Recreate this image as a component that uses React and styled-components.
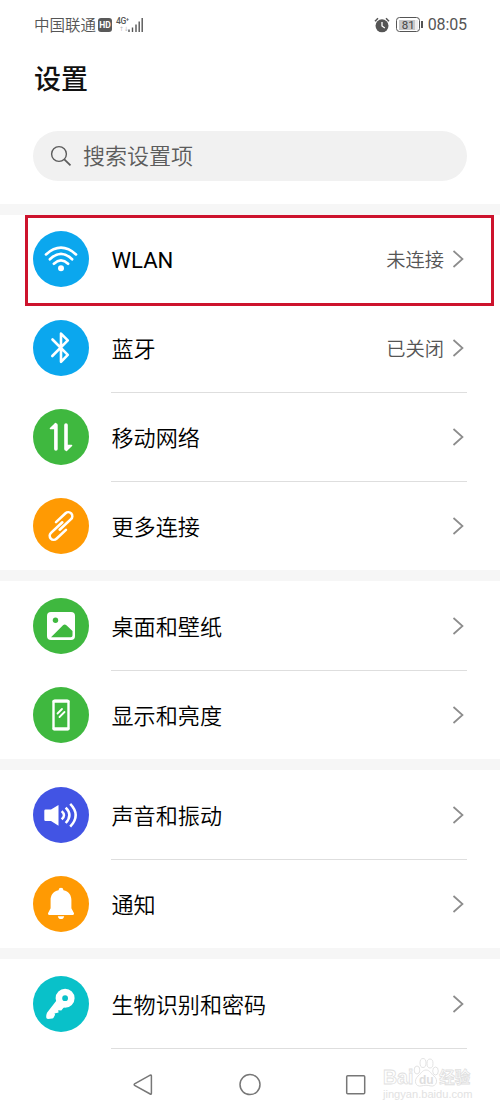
import React from "react";
import styled, { createGlobalStyle } from "styled-components";

const GlobalStyle = createGlobalStyle`
  * { box-sizing: border-box; }
  body {
    margin: 0;
    background: #fff;
    font-family: Roboto, "Noto Sans CJK SC", sans-serif;
    color: #111;
  }
  svg { display: block; flex: none; }
`;

const Screen = styled.main`
  width: 500px;
  height: 1111px;
  overflow: hidden;
  display: flex;
  flex-direction: column;
  background: #fff;
`;

const StatusBar = styled.header`
  height: 48px;
  padding: 1px 33px 0 34px;
  display: flex;
  align-items: center;
  justify-content: space-between;
  color: #555;
`;

const StatusGroup = styled.div`
  display: flex;
  align-items: center;
  height: 24px;
`;

const Carrier = styled.span`
  font-size: 15.5px;
  line-height: 24px;
  font-weight: 350;
  margin-right: 2px;
  padding-top: 2px;
`;

const HdBadge = styled.span`
  width: 14px;
  height: 14px;
  border-radius: 3px;
  background: #595959;
  color: #fff;
  font-size: 8.5px;
  line-height: 14px;
  font-weight: 700;
  text-align: center;
`;

const Network = styled.span`
  display: flex;
  flex-direction: column;
  width: 11px;
  height: 16px;
  margin-left: 4px;
  font-size: 8.5px;
  line-height: 8px;
  font-weight: 500;
  white-space: nowrap;
  letter-spacing: -0.4px;
`;

const Arrows = styled.span`
  font-family: "DejaVu Sans", sans-serif;
  font-size: 6px;
  line-height: 7px;
  padding-left: 3px;
  color: #bbb;
`;

const Battery = styled.span`
  display: flex;
  align-items: center;
  margin: 0 5px 0 6px;
`;

const BatteryBody = styled.span`
  width: 24px;
  height: 15px;
  padding: 1.5px;
  border: 1px solid #555;
  border-radius: 3.5px;
`;

const BatteryLevel = styled.span`
  display: block;
  height: 10px;
  background: linear-gradient(90deg, #c9c9c9 82%, #eee 82%);
  color: #444;
  font-size: 11.5px;
  line-height: 10.5px;
  text-align: center;
`;

const BatteryTip = styled.span`
  width: 1.5px;
  height: 7px;
  margin-left: 1px;
  background: #555;
`;

const Clock = styled.span`
  font-size: 16px;
  line-height: 24px;
  letter-spacing: -0.1px;
  padding-top: 1px;
`;

const Title = styled.h1`
  margin: 12px 0 0 34px;
  height: 40px;
  font-size: 27px;
  line-height: 40px;
  font-weight: 500;
`;

const SearchBox = styled.div`
  flex: none;
  height: 50px;
  margin: 31px 33px 23px;
  padding-left: 17px;
  border-radius: 25px;
  background: #f1f1f1;
  display: flex;
  align-items: center;
  gap: 11px;
  color: #5c5c5c;
  font-size: 22px;
  line-height: 32px;
  font-weight: 350;
`;

const SearchHint = styled.span`
  padding-top: 2px;
`;

const Group = styled.section`
  flex: none;
  border-top: 11px solid #f6f6f6;
  padding-top: ${(p) => (p.$first ? 0 : 1)}px;
`;

const Row = styled.div`
  position: relative;
  height: ${(p) => (p.$last ? 88 : 89)}px;
  padding: 0 33px;
  display: flex;
  gap: 22px;
`;

const IconDisc = styled.span`
  width: 56px;
  height: 56px;
  margin-top: 16px;
  border-radius: 50%;
  background: ${(p) => p.$color};
`;

const RowBody = styled.div`
  flex: 1;
  height: 89px;
  display: flex;
  align-items: center;
  padding-right: 2px;
  border-bottom: 1px solid ${(p) => (p.$last ? "transparent" : "#dedede")};
`;

const Label = styled.span`
  flex: 1;
  font-size: 22.1px;
  line-height: 32px;
  font-weight: ${(p) => (p.$latin ? 400 : 350)};
  color: #000;
  padding: 2px 0 0 0.5px;
`;

const Value = styled.span`
  font-size: 19.3px;
  line-height: 28px;
  color: #555;
  font-weight: 350;
  margin-right: 7px;
  padding-top: 4px;
`;

const Highlight = styled.div`
  position: absolute;
  left: 25px;
  right: 6px;
  top: 0;
  height: 91px;
  border: 3px solid #cd132d;
  z-index: 1;
`;

const NavBar = styled.nav`
  position: relative;
  flex: 1;
  display: flex;
  justify-content: space-between;
  padding: 24px 133px 0 132px;
`;

const Watermark = styled.div`
  position: absolute;
  left: 383px;
  top: 7px;
  width: 92px;
  color: #fff;
  -webkit-text-stroke: 0.8px #e0e0e0;
`;

const WatermarkBrand = styled.div`
  display: flex;
  align-items: flex-end;
  height: 32px;
  font-family: "Liberation Sans", "Noto Sans CJK SC", sans-serif;
  font-weight: 700;
  font-size: 19.5px;
  line-height: 22px;
`;

const WatermarkCjk = styled.span`
  font-size: 15.5px;
  line-height: 21px;
`;

const WatermarkSite = styled.div`
  font-family: "Liberation Sans", sans-serif;
  font-size: 11.1px;
  line-height: 12px;
  color: #e2e2e2;
  -webkit-text-stroke: 0;
`;

const stroke = { fill: "none", stroke: "#fff", strokeLinecap: "round", strokeLinejoin: "round" };

const glyphs = {
  wifi: (
    <g {...stroke} strokeWidth="2.7">
      <path d="M13 23.4Q28 9.8 43 23.4M16.9 28.2Q28 17.6 39.1 28.2M20.9 32.7Q28 26.2 35.1 32.7" />
      <circle cx="28" cy="37.3" r="3" fill="#fff" stroke="none" />
    </g>
  ),
  bluetooth: (
    <path {...stroke} strokeWidth="2.6" d="M19.5 19.5L34.8 34.9L28 41.8V13.6L34.8 20.4L19.3 36" />
  ),
  data: (
    <g {...stroke} strokeWidth="3.6">
      <path d="M22.9 16V40M33 16V40" />
      <path d="M22.6 14.4L17.4 19.6H22.6ZM33.4 41.6L38.6 36.4H33.4Z" fill="#fff" strokeWidth="1.4" />
    </g>
  ),
  link: (
    <path
      {...stroke}
      strokeWidth="2.6"
      transform="rotate(-43 28 28)"
      d="M27 21.8H40A4 4 0 0 1 40 29.8H24.5M29 34.2H16A4 4 0 0 1 16 26.2H31.5"
    />
  ),
  image: (
    <>
      <rect x="14" y="14" width="28" height="28" rx="4" fill="#fff" />
      <circle cx="22.5" cy="22.2" r="2.7" fill="#3fb83f" />
      <path d="M18 39.2L30 27.3Q31.7 25.7 33.4 27.3L39.5 33V37.4Q39.5 39.2 37.7 39.2Z" fill="#3fb83f" />
    </>
  ),
  phone: (
    <g {...stroke}>
      <rect x="20.5" y="13.6" width="15" height="28.8" rx="1.6" strokeWidth="2.4" />
      <path d="M20.9 14.2H35.1M20.9 41.8H35.1" strokeWidth="3" />
      <path d="M24.5 26.5L29 22M26.5 30L31.5 25" strokeWidth="1.8" />
    </g>
  ),
  sound: (
    <>
      <path d="M12.5 22.6H18L25.5 17.9V38.7L18 33.9H12.5Q11.3 33.9 11.3 32.7V23.8Q11.3 22.6 12.5 22.6Z" fill="#fff" />
      <g {...stroke} strokeWidth="2.5" strokeLinecap="butt">
        <path d="M28.7 24.1Q33.3 28.2 28.7 32.4M32.7 20.7Q40.2 28.2 32.7 36M37.2 16.9Q48.2 28.2 37.2 39.7" />
      </g>
    </>
  ),
  bell: (
    <path
      fill="#fff"
      d="M25.5 14.2Q25.8 11.8 28 11.8Q30.2 11.8 30.5 14.2C35.8 15.2 38.4 19.2 38.4 24V32.2L41 37.3Q41.3 38.8 39.8 38.9H16.2Q14.7 38.8 15 37.3L17.6 32.2V24C17.6 19.2 20.2 15.2 25.5 14.2ZM24.8 40.2H31.2Q30.5 43.1 28 43.1Q25.5 43.1 24.8 40.2Z"
    />
  ),
  key: (
    <>
      <circle cx="32.1" cy="22.2" r="6.2" fill="none" stroke="#fff" strokeWidth="6.6" />
      <path
        fill="#fff"
        d="M23.3 24.8L14 36.8Q13.2 38.6 13.2 41.2Q13.3 43 15 43L19.3 42.5Q20.2 42.4 20.7 41.4L22.1 38.8L21.5 37.4L25.6 36.5L25.2 34.2L28.3 34.6L31.6 30.5Z"
      />
    </>
  ),
};

const groups = [
  [
    { icon: "wifi", color: "#0ba7ee", label: "WLAN", latin: true, value: "未连接", highlighted: true },
    { icon: "bluetooth", color: "#0ba7ee", label: "蓝牙", value: "已关闭" },
    { icon: "data", color: "#3fb83f", label: "移动网络" },
    { icon: "link", color: "#ff9a03", label: "更多连接" },
  ],
  [
    { icon: "image", color: "#3fb83f", label: "桌面和壁纸" },
    { icon: "phone", color: "#3fb83f", label: "显示和亮度" },
  ],
  [
    { icon: "sound", color: "#4254e4", label: "声音和振动" },
    { icon: "bell", color: "#ff9a03", label: "通知" },
  ],
  [{ icon: "key", color: "#09c1c9", label: "生物识别和密码", divided: true }],
];

const Chevron = () => (
  <svg width="14" height="20" viewBox="0 0 14 20">
    <path d="M2.5 2L11.5 10L2.5 18" fill="none" stroke="#8c8c8c" strokeWidth="1.7" />
  </svg>
);

const SettingRow = ({ item, last }) => (
  <Row $last={last}>
    {item.highlighted && <Highlight />}
    <IconDisc $color={item.color}>
      <svg width="56" height="56" viewBox="0 0 56 56">{glyphs[item.icon]}</svg>
    </IconDisc>
    <RowBody $last={last}>
      <Label $latin={item.latin}>{item.label}</Label>
      {item.value && <Value>{item.value}</Value>}
      <Chevron />
    </RowBody>
  </Row>
);

export default function App() {
  return (
    <Screen>
      <GlobalStyle />
      <StatusBar>
        <StatusGroup>
          <Carrier>中国联通</Carrier>
          <HdBadge>HD</HdBadge>
          <Network>
            4G⁺
            <Arrows>↑↓</Arrows>
          </Network>
          <svg width="16" height="16" viewBox="0 0 16 16">
            <path d="M2 12.5V15M5.5 10.5V15M9 7.5V15M12.2 4.5V15M15.2 1V15" stroke="#555" strokeWidth="1.4" />
          </svg>
        </StatusGroup>
        <StatusGroup>
          <svg width="16" height="16" viewBox="0 0 16 16">
            <circle cx="8" cy="8.8" r="6.5" fill="#555" />
            <path d="M8 5V9L10.8 11" fill="none" stroke="#fff" strokeWidth="1.3" />
            <path d="M1 4.2L4 1.3M15 4.2L12 1.3" stroke="#555" strokeWidth="1.5" />
          </svg>
          <Battery>
            <BatteryBody>
              <BatteryLevel>81</BatteryLevel>
            </BatteryBody>
            <BatteryTip />
          </Battery>
          <Clock>08:05</Clock>
        </StatusGroup>
      </StatusBar>
      <Title>设置</Title>
      <SearchBox>
        <svg width="22" height="22" viewBox="0 0 22 22">
          <circle cx="9" cy="9" r="7.4" fill="none" stroke="#5c5c5c" strokeWidth="1.4" />
          <path d="M14.3 14.3L20.5 20.3" stroke="#5c5c5c" strokeWidth="1.8" />
        </svg>
        <SearchHint>搜索设置项</SearchHint>
      </SearchBox>
      {groups.map((rows, g) => (
        <Group key={g} $first={g === 0}>
          {rows.map((item, i) => (
            <SettingRow key={item.label} item={item} last={i === rows.length - 1 && !item.divided} />
          ))}
        </Group>
      ))}
      <NavBar>
        <svg width="22" height="24" viewBox="0 0 22 24">
          <path d="M18.2 2.2Q19.4 1.7 19.4 3V20.2Q19.4 21.5 18.2 21L2.6 12.4Q1.7 11.6 2.6 10.8Z" fill="none" stroke="#777" strokeWidth="1.5" />
        </svg>
        <svg width="24" height="24" viewBox="0 0 24 24">
          <circle cx="12" cy="11.6" r="10" fill="none" stroke="#777" strokeWidth="1.5" />
        </svg>
        <svg width="22" height="24" viewBox="0 0 22 24">
          <rect x="1.7" y="2.7" width="18" height="18" rx="1" fill="none" stroke="#777" strokeWidth="1.5" />
        </svg>
        <Watermark>
          <WatermarkBrand>
            Bai
            <svg width="26" height="31" viewBox="0 0 26 31" fill="#fff" stroke="#e0e0e0" strokeWidth="0.9">
              <ellipse cx="4" cy="13" rx="2.8" ry="4" />
              <ellipse cx="10" cy="6" rx="3" ry="4.5" />
              <ellipse cx="17" cy="6.5" rx="3" ry="4.5" />
              <ellipse cx="22.5" cy="14" rx="2.8" ry="4" />
              <path d="M13 13C17 13 18 17 21 19C26 23 23 30 18 29C14 28 12 28 8 29C3 30 0 24 5 19C8 17 9 13 13 13Z" />
              <text x="6" y="26.5" fontSize="12" fontFamily="Liberation Sans" fontWeight="700" fill="#dedede" stroke="none">du</text>
            </svg>
            <WatermarkCjk>经验</WatermarkCjk>
          </WatermarkBrand>
          <WatermarkSite>jingyan.baidu.com</WatermarkSite>
        </Watermark>
      </NavBar>
    </Screen>
  );
}
